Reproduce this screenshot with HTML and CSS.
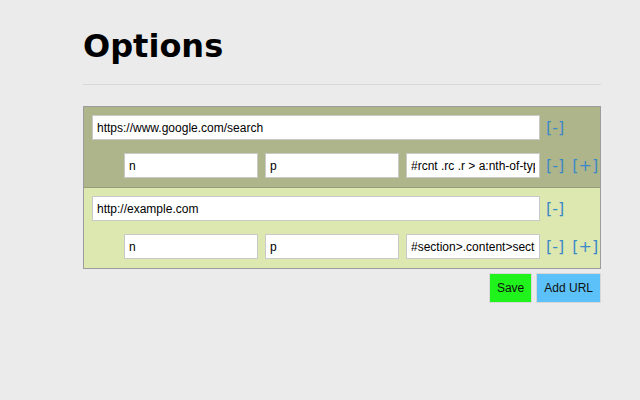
FILE: index.html
```html
<!DOCTYPE html>
<html>
<head>
<meta charset="utf-8">
<title>Options</title>
<link rel="stylesheet" href="styles.css">
</head>
<body>
<div class="page">
  <h1 class="title">Options</h1>
  <div class="rule"></div>
  <div class="rules">
    <div class="site site-a">
      <div class="row">
        <input class="field url" type="text" value="https://www.google.com/search">
        <span class="links"><a class="lnk">[-]</a></span>
      </div>
      <div class="row sub">
        <input class="field small" type="text" value="n">
        <input class="field small" type="text" value="p">
        <input class="field small" type="text" value="#rcnt .rc .r &gt; a:nth-of-type(1)">
        <span class="links"><a class="lnk">[-]</a><a class="lnk plus">[+]</a></span>
      </div>
    </div>
    <div class="site site-b">
      <div class="row">
        <input class="field url" type="text" value="http://example.com">
        <span class="links"><a class="lnk">[-]</a></span>
      </div>
      <div class="row sub">
        <input class="field small" type="text" value="n">
        <input class="field small" type="text" value="p">
        <input class="field small" type="text" value="#section&gt;.content&gt;section">
        <span class="links"><a class="lnk">[-]</a><a class="lnk plus">[+]</a></span>
      </div>
    </div>
  </div>
  <div class="actions">
    <button class="btn save">Save</button>
    <button class="btn add">Add URL</button>
  </div>
</div>
</body>
</html>
```

FILE: styles.css
```css
html, body {
  margin: 0;
  padding: 0;
  background: #ebebeb;
}
body {
  font-family: "Liberation Sans", Arial, sans-serif;
  color: #000;
}
.page {
  margin-left: 83px;
  width: 518px;
}
.title {
  font-family: "DejaVu Sans", Verdana, sans-serif;
  font-weight: bold;
  font-size: 32px;
  line-height: 37px;
  margin: 28px 0 0;
}
.rule {
  border-top: 1px solid #d7d7d7;
  margin-top: 19px;
}
.rules {
  margin-top: 21px;
  border: 1px solid #9c9c9c;
}
.site {
  padding: 8px 0 9px 8px;
}
.site-a {
  background: #aeb58a;
  border-bottom: 1px solid #979c7a;
}
.site-b {
  background: #dce8b0;
}
.row {
  display: flex;
  align-items: center;
  gap: 7px;
}
.row.sub {
  margin-top: 13px;
  padding-left: 32px;
}
.field {
  box-sizing: border-box;
  height: 25px;
  margin: 0;
  padding: 0 4px;
  border: 1px solid #c9c9c9;
  background: #fff;
  font-family: "Liberation Sans", Arial, sans-serif;
  font-size: 12px;
  color: #000;
  outline: none;
}
.url {
  width: 448px;
}
.small {
  width: 134px;
}
.links {
  margin-left: -1px;
  display: flex;
  gap: 8px;
}
.lnk {
  font-family: "DejaVu Sans", Verdana, sans-serif;
  font-size: 16px;
  color: #3d88c6;
  cursor: pointer;
}
.actions {
  display: flex;
  justify-content: flex-end;
  gap: 4px;
  margin-top: 4px;
}
.btn {
  box-sizing: border-box;
  height: 30px;
  margin: 0;
  padding: 0 7px;
  border: 1px solid #d8d8d8;
  font-family: "Liberation Sans", Arial, sans-serif;
  font-size: 12px;
  color: #111;
}
.save {
  background: #20f21c;
}
.add {
  background: #5cc1f8;
}
```
